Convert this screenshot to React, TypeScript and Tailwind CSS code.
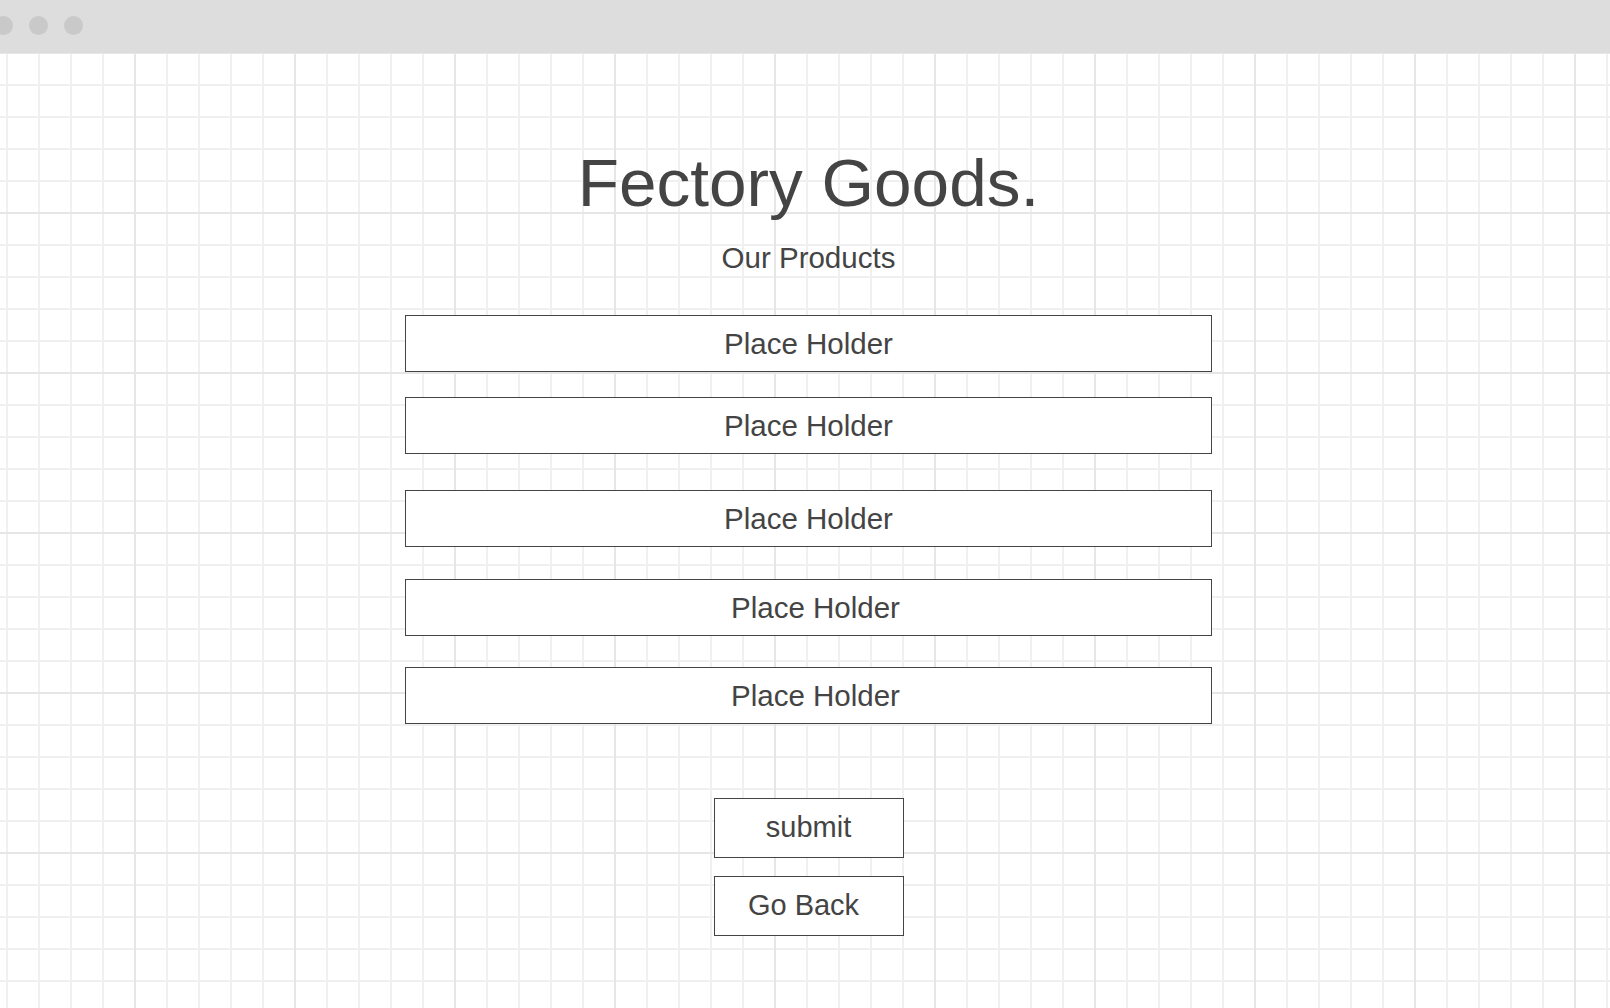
import React from 'react';

const products = [
  { label: 'Place Holder', className: 'mt-0' },
  { label: 'Place Holder', className: 'mt-[25px]' },
  { label: 'Place Holder', className: 'mt-[36px]' },
  { label: 'Place Holder', className: 'mt-[32px] pl-[14px]' },
  { label: 'Place Holder', className: 'mt-[31px] pl-[14px]' },
];

const App = () => {
  return (
    <div className="flex h-[1008px] w-full flex-col overflow-hidden bg-white font-['Liberation_Sans',Arial,sans-serif] text-[#444444]">
      {/* window chrome */}
      <div className="flex h-[53px] shrink-0 items-start gap-[16px] bg-[#dddddd] pt-[16px] pl-0">
        <span className="-ml-[6px] h-[19px] w-[19px] rounded-full bg-[#c9c9c9]" />
        <span className="h-[19px] w-[19px] rounded-full bg-[#c9c9c9]" />
        <span className="h-[19px] w-[19px] rounded-full bg-[#c9c9c9]" />
      </div>

      {/* grid canvas */}
      <div className="flex flex-1 flex-col items-center bg-white bg-[linear-gradient(to_right,#e6e6e6_2px,transparent_2px),linear-gradient(to_bottom,#e6e6e6_2px,transparent_2px),linear-gradient(to_right,#f0f0f0_2px,transparent_2px),linear-gradient(to_bottom,#f0f0f0_2px,transparent_2px)] bg-[size:160px_160px,160px_160px,32px_32px,32px_32px] bg-[position:134px_159px,134px_159px,6px_31px,6px_31px] pl-[7px] pt-[96px]">
        <h1 className="text-[67.5px] leading-none">Fectory Goods.</h1>
        <p className="mt-[26px] text-[29.5px] leading-none">Our Products</p>

        <ul className="mt-[43px] flex flex-col">
          {products.map((p, i) => (
            <li
              key={i}
              className={`flex h-[57px] w-[807px] items-center justify-center border border-[#444444] bg-white pt-[1px] text-[29.5px] leading-none ${p.className}`}
            >
              {p.label}
            </li>
          ))}
        </ul>

        <button className="mt-[74px] flex h-[60px] w-[190px] items-center justify-center border border-[#444444] bg-white pb-[2px] text-[29px] leading-none">
          submit
        </button>
        <button className="mt-[18px] flex h-[60px] w-[190px] items-center justify-center border border-[#444444] bg-white pr-[10px] pb-[2px] text-[29px] leading-none">
          Go Back
        </button>
      </div>
    </div>
  );
};

export default App;
